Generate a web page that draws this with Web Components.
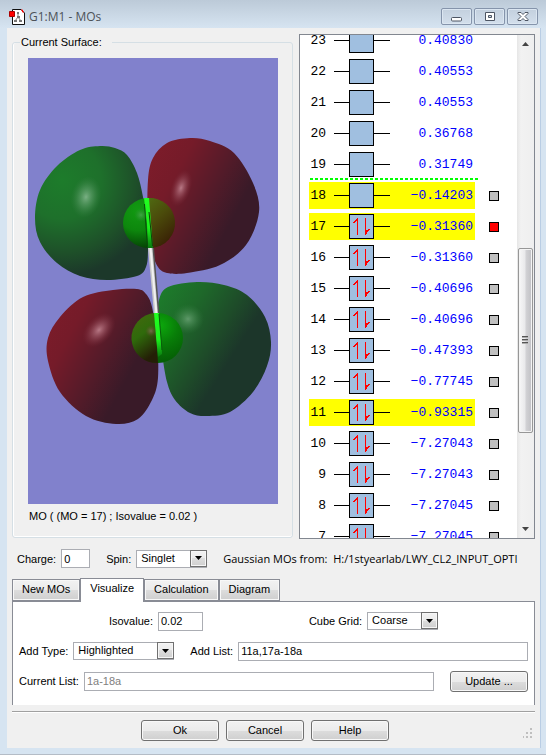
<!DOCTYPE html>
<html lang="en">
<head>
<meta charset="utf-8">
<meta name="viewport" content="width=device-width, initial-scale=1">
<title>G1:M1 - MOs</title>
<style>
  body {
    margin: 0;
    font: 11px/14px "Liberation Sans", Arial, sans-serif;
    color: #000;
  }

  .top {
    display: flex;
    gap: 6px;
    flex: 1 1 0;
    min-height: 0;
  }
  group-box { flex: 281 1 0; min-width: 0; }
  mo-list { flex: 234 1 0; min-width: 0; }

  .settings {
    display: flex;
    align-items: center;
    gap: 16px;
    height: 19px;
    margin: 10px 5px;
  }
  .source {
    flex: 1;
    min-width: 0;
    overflow: hidden;
    white-space: pre;
    font: 11px/18px "Open Sans", "Noto Sans", sans-serif;
  }

  .row {
    display: flex;
    align-items: center;
    gap: 16px;
    height: 20px;
  }
  .row.spread { justify-content: space-evenly; }
  .grow { flex: 1; }
</style>
</head>
<body>

<mo-window heading="G1:M1 - MOs">
  <div class="top">
    <group-box legend="Current Surface:" caption="MO ( (MO = 17) ; Isovalue = 0.02 )">
      <surface-view></surface-view>
    </group-box>
    <mo-list></mo-list>
  </div>

  <div class="settings">
    <text-field label="Charge:" value="0" size="29"></text-field>
    <select-field label="Spin:" value="Singlet" size="71"></select-field>
    <div class="source">Gaussian MOs from:  H:/1styearlab/LWY_CL2_INPUT_OPTI</div>
  </div>

  <tab-panel tabs="New MOs,Visualize,Calculation,Diagram" selected="1">
    <div class="row spread">
      <text-field label="Isovalue:" value="0.02" size="45"></text-field>
      <select-field label="Cube Grid:" value="Coarse" size="71"></select-field>
    </div>
    <div class="row">
      <select-field label="Add Type:" value="Highlighted" size="101"></select-field>
      <text-field class="grow" label="Add List:" value="11a,17a-18a"></text-field>
    </div>
    <div class="row">
      <text-field class="grow" label="Current List:" value="1a-18a" readonly></text-field>
      <push-button>Update ...</push-button>
    </div>
  </tab-panel>

  <push-button slot="actions">Ok</push-button>
  <push-button slot="actions">Cancel</push-button>
  <push-button slot="actions">Help</push-button>
</mo-window>

<script>
const baseCss = /*css*/`
  *, ::before, ::after { box-sizing: border-box; }
  button, input, select { font: inherit; color: inherit; margin: 0; padding: 0; border-radius: 0; }
`;

function attach(elt, html) {
  let shadow = elt.attachShadow({mode: 'open'});
  let templateElt = document.createElement('template');
  templateElt.innerHTML = `<style>${baseCss}</style>` + html;
  shadow.appendChild(templateElt.content.cloneNode(true));
  return shadow;
}

class MoWindow extends HTMLElement {
  constructor() {
    super();
    this.shadow = attach(this, /*html*/`
      <style>
        :host {
          display: flex;
          flex-direction: column;
          box-sizing: border-box;
          height: 100vh;
          padding: 0 6px 6px 7px;
          background: linear-gradient(#bccad8, #d6e4f1 28px);
          border-bottom: 1px solid #b4bcc6;
        }
        header {
          display: flex;
          align-items: center;
          height: 28px;
          padding: 5px 2px 0;
          gap: 4px;
        }
        h1 {
          flex: 1;
          margin: 0;
          font: 12px/18px "Open Sans", "Noto Sans", sans-serif;
          color: #4c5258;
        }
        .controls { display: flex; gap: 2px; }
        .controls button {
          width: 31px;
          height: 17px;
          border: 1px solid #8594ab;
          border-radius: 2px;
          background: linear-gradient(#c3d0de, #d3dfec);
          box-shadow: inset 0 0 0 1px #dbe6f1;
        }
        .controls svg { display: block; margin: auto; }
        main {
          flex: 1;
          min-height: 0;
          display: flex;
          flex-direction: column;
          padding: 6px 5px 0;
          background: #f0f0f0;
          box-shadow: 1px 0 #b9cde4;
        }
        footer {
          display: flex;
          align-items: flex-end;
          height: 37px;
          margin-top: 6px;
          padding-bottom: 7px;
          border-top: 1px solid #a0a0a0;
          box-shadow: inset 0 1px #fff;
        }
        .actions { flex: 1; display: flex; justify-content: center; gap: 7px; }
        .grip { width: 17px; text-align: right; }
      </style>
      <header>
        <svg width="16" height="16" viewBox="0 0 16 16" aria-hidden="true">
          <path d="M3.500.5H12l3.500 3.500V15.500H3.500z" fill="#fff" stroke="#111"/>
          <path d="M12 1h1.500v2H15" fill="none" stroke="#f00"/>
          <path d="M9 4v4M9 8l-3 4M9 8l3 4" stroke="#777" stroke-width="1"/>
          <path d="M8 3h2v2H8zM8 7h3v2H8zM5 11h3v2H5zM10 11h3v2h-3z" fill="#777"/>
          <path d="M.5 2.500h5v5h-5z" fill="#f00" stroke="#a00"/>
        </svg>
        <h1></h1>
        <div class="controls">
          <button aria-label="Minimize"><svg width="12" height="11" viewBox="0 0 12 11"><rect x=".5" y="6.500" width="10" height="3.500" rx="1" fill="#fff" stroke="#4d5563"/></svg></button>
          <button aria-label="Maximize"><svg width="12" height="11" viewBox="0 0 12 11"><path d="M1.500 1.500h9v8h-9zM4.500 4.500h3v2h-3z" fill="#fff" fill-rule="evenodd" stroke="#4d5563"/></svg></button>
          <button aria-label="Close"><svg width="12" height="11" viewBox="0 0 12 11"><path d="M1 1.500h3l2 2 2-2h3v1L8 5.500l3 3v1H8l-2-2-2 2H1v-1l3-3-3-3z" fill="#fff" stroke="#4d5563"/></svg></button>
        </div>
      </header>
      <main>
        <slot></slot>
        <footer>
          <div class="actions"><slot name="actions"></slot></div>
          <div class="grip">
            <svg width="12" height="11" viewBox="0 0 12 11" fill="#bfbfbf" aria-hidden="true"><path d="M7 1h2v2H7zM7 5h2v2H7zM7 9h2v2H7zM3 5h2v2H3zM3 9h2v2H3zM-1 9h2v2h-2z"/></svg>
          </div>
        </footer>
      </main>
    `);
  }

  connectedCallback() {
    this.shadow.querySelector('h1').textContent = this.getAttribute('heading');
  }
}

class GroupBox extends HTMLElement {
  constructor() {
    super();
    this.shadow = attach(this, /*html*/`
      <style>
        :host { display: flex; }
        fieldset {
          flex: 1;
          min-width: 0;
          display: flex;
          flex-direction: column;
          margin: 1px 0;
          padding: 9px 14px 14px 15px;
          border: 1px solid #d5dfe5;
          border-radius: 3px;
          box-shadow: inset 1px 0 #fff, inset 0 -1px #fff;
        }
        legend { margin-left: -8px; padding: 0 10px 0 1px; }
        .content { flex: 1; min-height: 0; display: flex; }
        .caption { margin: 5px 1px 0; white-space: nowrap; }
      </style>
      <fieldset>
        <legend></legend>
        <div class="content"><slot></slot></div>
        <div class="caption"></div>
      </fieldset>
    `);
  }

  connectedCallback() {
    this.shadow.querySelector('legend').textContent = this.getAttribute('legend');
    this.shadow.querySelector('.caption').textContent = this.getAttribute('caption');
  }
}

// outlines of the four lobes, as points along the edge
const lobes = [
  { fill: 'green', points: [[100,146],[115,148],[127,155],[137,173],[143,197],[147,225],[148,250],[146,267],[137,276],[107,280],[80,276],[57,263],[40,242],[35,218],[40,190],[57,166],[80,150]] },
  { fill: 'red', points: [[190,138],[167,143],[153,158],[148,180],[148,220],[153,253],[158,267],[167,273],[187,273],[220,265],[246,245],[259,212],[253,183],[234,153],[210,141]] },
  { fill: 'red', points: [[137,289],[113,290],[83,297],[60,317],[48,338],[48,361],[60,392],[86,416],[116,424],[138,419],[152,400],[158,378],[157,340],[152,307],[146,294]] },
  { fill: 'green2', points: [[197,282],[168,287],[159,300],[158,320],[162,353],[167,382],[175,400],[190,413],[207,416],[230,412],[253,392],[267,366],[271,342],[265,317],[247,295],[224,285]] },
];

// closed Catmull-Rom curve through the points
function smoothPath(points) {
  let n = points.length;
  let d = `M${points[0]}`;
  for (let i = 0; i < n; i++) {
    let [a, b, c, e] = [points[(i + n - 1) % n], points[i], points[(i + 1) % n], points[(i + 2) % n]];
    let c1 = [0, 1].map(k => b[k] + (c[k] - a[k]) / 6);
    let c2 = [0, 1].map(k => c[k] - (e[k] - b[k]) / 6);
    d += `C${c1} ${c2} ${c}`;
  }
  return d + 'Z';
}

class SurfaceView extends HTMLElement {
  constructor() {
    super();
    attach(this, /*html*/`
      <style>
        :host { display: block; flex: 1; min-width: 0; background: #8181cc; }
        svg { display: block; width: 100%; height: 100%; }
      </style>
      <svg viewBox="28 58 250 446" role="img" aria-label="Molecular orbital surface">
        <defs>
          <radialGradient id="green" gradientUnits="userSpaceOnUse" cx="62" cy="180" r="112">
            <stop offset="0" stop-color="#1d7c2b"/><stop offset=".35" stop-color="#1e702b"/><stop offset=".65" stop-color="#1e5029"/><stop offset=".85" stop-color="#1c382a"/>
          </radialGradient>
          <linearGradient id="red" x1="0" y1=".1" x2=".85" y2=".65">
            <stop offset="0" stop-color="#7e1c2a"/><stop offset=".3" stop-color="#751b29"/><stop offset=".65" stop-color="#521b29"/><stop offset=".9" stop-color="#391a28"/>
          </linearGradient>
          <linearGradient id="green2" x1="0" y1=".1" x2=".8" y2=".7">
            <stop offset="0" stop-color="#1d7c2b"/><stop offset=".3" stop-color="#1e682a"/><stop offset=".6" stop-color="#1e4b29"/><stop offset=".8" stop-color="#1c362a"/>
          </linearGradient>
          <radialGradient id="ball" cx=".3" cy=".25" r=".8">
            <stop offset="0" stop-color="#129a12"/><stop offset=".5" stop-color="#0d870d"/><stop offset="1" stop-color="#043c04"/>
          </radialGradient>
          <radialGradient id="ballRight" cx=".55" cy=".25" r=".7">
            <stop offset="0" stop-color="#0ca80c"/><stop offset=".5" stop-color="#087d08"/><stop offset="1" stop-color="#056005"/>
          </radialGradient>
          <linearGradient id="olive" x1="0" y1="0" x2=".5" y2="1">
            <stop offset="0" stop-color="#4f6b12"/><stop offset=".45" stop-color="#4b4c0b"/><stop offset="1" stop-color="#3a2205"/>
          </linearGradient>
          <linearGradient id="olive2" x1="0" y1="0" x2=".4" y2="1">
            <stop offset="0" stop-color="#47680f"/><stop offset=".5" stop-color="#2f6a0b"/><stop offset="1" stop-color="#241f06"/>
          </linearGradient>
          <linearGradient id="stripe" x1="0" y1="0" x2="0" y2="1">
            <stop offset="0" stop-color="#21ff21"/><stop offset=".6" stop-color="#1cf01c"/><stop offset="1" stop-color="#0a770f"/>
          </linearGradient>
          <radialGradient id="shineGreen"><stop offset="0" stop-color="#84b78e" stop-opacity=".9"/><stop offset=".5" stop-color="#5d9c69" stop-opacity=".5"/><stop offset="1" stop-color="#3c8048" stop-opacity="0"/></radialGradient>
          <radialGradient id="shineRed"><stop offset="0" stop-color="#b87986"/><stop offset=".5" stop-color="#9d5563" stop-opacity=".5"/><stop offset="1" stop-color="#7e2b3a" stop-opacity="0"/></radialGradient>
        </defs>
        <g>${lobes.map(lobe => `<path d="${smoothPath(lobe.points)}" fill="url(#${lobe.fill})"/>`).join('')}</g>
        <ellipse cx="86" cy="197" rx="15" ry="21" fill="url(#shineGreen)" transform="rotate(12 86 197)"/>
        <ellipse cx="181" cy="188" rx="10" ry="19" fill="url(#shineRed)" transform="rotate(18 181 188)"/>
        <ellipse cx="99" cy="330" rx="13" ry="20" fill="url(#shineRed)" transform="rotate(42 99 330)"/>
        <ellipse cx="188" cy="319" rx="16" ry="15" fill="url(#shineGreen)" opacity=".7"/>

        <path d="M148 248h5l6 66h-5z" fill="#c9c9c9"/>
        <path d="M149.500 248h2l6 66h-2z" fill="#f1f1f1"/>
        <path d="M152.500 248h1.500l5.500 66h-1.500z" fill="#555"/>

        <circle cx="148" cy="223" r="25" fill="url(#ball)"/>
        <path d="M148 198a25 25 0 0 1 4 50z" fill="url(#olive)"/>
        <path d="M144 198h5l4 50h-5l-1-24z" fill="url(#stripe)"/>
        <path d="M144.500 204l3 44" stroke="#0a4a0a" fill="none"/>
        <path d="M149 212l3.500 34" stroke="#12400a" fill="none"/>
        <circle cx="141" cy="215" r="7" fill="url(#shineGreen)" opacity=".45"/>

        <circle cx="158" cy="338" r="25" fill="url(#ballRight)"/>
        <path d="M155 313a25 25 0 0 0 3 50z" fill="url(#olive2)"/>
        <path d="M154 313h5l3 41-4 3-2-20z" fill="url(#stripe)"/>
        <path d="M159 314l3 36" stroke="#0a5c0a" fill="none"/>
        <circle cx="151" cy="331" r="6" fill="url(#shineRed)" opacity=".5"/>
      </svg>
    `);
  }
}

class MoRow extends HTMLElement {
  constructor() {
    super();
    this.shadow = attach(this, /*html*/`
      <style>
        :host {
          position: relative;
          display: flex;
          align-items: center;
          gap: 14px;
          height: 31px;
          padding-left: 9px;
          font: 13px/27px "Liberation Mono", "Courier New", monospace;
        }
        :host([homo-gap])::before {
          content: "";
          position: absolute;
          left: 10px;
          top: -2px;
          width: 169px;
          height: 2px;
          background: repeating-linear-gradient(90deg, #0f0 0 3px, #fff 3px 5px);
        }
        .level {
          display: flex;
          align-items: center;
          width: 166px;
          height: 27px;
        }
        :host([highlighted]) .level { background: #ff0; }
        .number { width: 17px; text-align: right; }
        .line { width: 16px; height: 1px; background: #000; }
        .number + .line { width: 15px; margin-left: 8px; }
        .box {
          width: 25px;
          height: 25px;
          border: 1px solid #000;
          background: #a0bfe0;
        }
        .box svg { display: block; }
        :host(:not([occupied])) .box svg { display: none; }
        .energy { flex: 1; text-align: right; padding-right: 2px; color: #00f; }
        input {
          appearance: none;
          width: 10px;
          height: 10px;
          border: 1px solid #000;
          background: #c0c0c0;
        }
        input:checked { background: #f00; }
        :host(:not([surface])) input { display: none; }
      </style>
      <div class="level">
        <span class="number"></span>
        <span class="line"></span>
        <span class="box">
          <svg width="23" height="23" viewBox="0 0 23 23" fill="#f00" shape-rendering="crispEdges" aria-hidden="true">
            <path d="M7 3h1v17H7zM15 3h1v17h-1z"/>
            <path d="M8 3v3H6v1H5v1H3V7h1V6h1V5h1V4h1V3zM15 20v-6h1v1h2v-1h2v1h-1v1h-1v1h-1v2h-1v1z"/>
          </svg>
        </span>
        <span class="line"></span>
        <span class="energy"></span>
      </div>
      <input type="checkbox">
    `);
  }

  connectedCallback() {
    let number = this.getAttribute('number');
    this.shadow.querySelector('.number').textContent = number;
    this.shadow.querySelector('.energy').textContent = this.getAttribute('energy');
    let inputElt = this.shadow.querySelector('input');
    inputElt.setAttribute('aria-label', `Show surface ${number}`);
    inputElt.checked = this.hasAttribute('current');
  }
}

const orbitals = [
  [23, '0.40830'], [22, '0.40553'], [21, '0.40553'], [20, '0.36768'], [19, '0.31749'],
  [18, '−0.14203'], [17, '−0.31360'], [16, '−0.31360'], [15, '−0.40696'],
  [14, '−0.40696'], [13, '−0.47393'], [12, '−0.77745'], [11, '−0.93315'],
  [10, '−7.27043'], [9, '−7.27043'], [8, '−7.27045'], [7, '−7.27045'],
];

class MoList extends HTMLElement {
  constructor() {
    super();
    this.shadow = attach(this, /*html*/`
      <style>
        :host {
          display: flex;
          box-sizing: border-box;
          border: 1px solid #828790;
          background: #fff;
        }
        .rows {
          flex: 1;
          min-width: 0;
          overflow: auto;
          scrollbar-width: none;
        }
        .scrollbar {
          display: flex;
          flex-direction: column;
          align-items: center;
          width: 17px;
          background: linear-gradient(90deg, #e6e6e6, #f2f2f2 4px, #efefef);
        }
        .arrow { display: block; flex: none; }
        .before { flex: 196; }
        .after { flex: 88; }
        .thumb {
          flex: 184;
          display: flex;
          align-items: center;
          justify-content: center;
          width: 15px;
          border: 1px solid #979797;
          border-radius: 2px;
          background: linear-gradient(90deg, #f8f8f8, #e9e9eb 6px, #d2d2d5 7px, #c0c0c4);
          box-shadow: inset 0 0 0 1px #f4f4f4;
        }
      </style>
      <div class="rows"></div>
      <div class="scrollbar" aria-hidden="true">
        <svg class="arrow" width="17" height="17" viewBox="0 0 17 17"><path d="M5 11l3.500-4 3.500 4z" fill="#444"/></svg>
        <div class="before"></div>
        <div class="thumb">
          <svg width="7" height="9" viewBox="0 0 7 9" stroke="#555"><path d="M0 .5h6M0 3.500h6M0 6.500h6"/><path d="M0 1.500h6M0 4.500h6M0 7.500h6" stroke="#aaa"/></svg>
        </div>
        <div class="after"></div>
        <svg class="arrow" width="17" height="17" viewBox="0 0 17 17"><path d="M5 6l3.500 4L12 6z" fill="#444"/></svg>
      </div>
    `);
  }

  connectedCallback() {
    let rowsElt = this.shadow.querySelector('.rows');
    orbitals.forEach(([number, energy]) => {
      let rowElt = document.createElement('mo-row');
      rowElt.setAttribute('number', number);
      rowElt.setAttribute('energy', energy);
      rowElt.toggleAttribute('occupied', number <= 17);
      rowElt.toggleAttribute('surface', number <= 18);
      rowElt.toggleAttribute('homo-gap', number === 18);
      rowElt.toggleAttribute('highlighted', [11, 17, 18].includes(number));
      rowElt.toggleAttribute('current', number === 17);
      rowsElt.appendChild(rowElt);
    });
    rowsElt.scrollTop = 10;
  }
}

class TextField extends HTMLElement {
  constructor() {
    super();
    this.shadow = attach(this, /*html*/`
      <style>
        :host { display: flex; align-items: center; gap: 5px; }
        label { white-space: nowrap; }
        input {
          flex: 1;
          min-width: 0;
          height: 19px;
          padding: 0 2px;
          border: 1px solid #abadb3;
          background: #fff;
        }
        :host([size]) input { flex: none; }
        input:read-only { color: #808080; }
      </style>
      <label for="field"></label>
      <input id="field" type="text">
    `);
  }

  connectedCallback() {
    this.shadow.querySelector('label').textContent = this.getAttribute('label');
    let inputElt = this.shadow.querySelector('input');
    inputElt.value = this.getAttribute('value');
    inputElt.readOnly = this.hasAttribute('readonly');
    if (this.hasAttribute('size')) {
      inputElt.style.width = this.getAttribute('size') + 'px';
    }
  }
}

class SelectField extends HTMLElement {
  constructor() {
    super();
    this.shadow = attach(this, /*html*/`
      <style>
        :host { display: flex; align-items: center; gap: 5px; }
        label { white-space: nowrap; }
        .control { display: grid; height: 18px; }
        select, .arrow { grid-area: 1 / 1; }
        select {
          appearance: none;
          width: 100%;
          height: 18px;
          padding: 0 18px 2px 4px;
          border: 1px solid #abadb3;
          background: #fff;
        }
        .arrow {
          justify-self: end;
          display: flex;
          align-items: center;
          justify-content: center;
          width: 17px;
          height: 17px;
          border: 1px solid #707070;
          background: linear-gradient(#f2f2f2, #ebebeb 50%, #dddddd 50%, #cfcfcf);
          box-shadow: inset 0 0 0 1px #f6f6f6;
          pointer-events: none;
        }
      </style>
      <label for="field"></label>
      <div class="control">
        <select id="field"><option></option></select>
        <span class="arrow"><svg width="7" height="4" viewBox="0 0 7 4"><path d="M0 0h7L3.500 4z"/></svg></span>
      </div>
    `);
  }

  connectedCallback() {
    this.shadow.querySelector('label').textContent = this.getAttribute('label');
    this.shadow.querySelector('option').textContent = this.getAttribute('value');
    this.shadow.querySelector('.control').style.width = this.getAttribute('size') + 'px';
  }
}

class PushButton extends HTMLElement {
  constructor() {
    super();
    attach(this, /*html*/`
      <style>
        :host { display: block; }
        button {
          display: block;
          min-width: 78px;
          height: 21px;
          padding: 0 8px 1px;
          border: 1px solid #707070;
          border-radius: 3px;
          background: linear-gradient(#f2f2f2, #ebebeb 50%, #dddddd 50%, #cfcfcf);
          box-shadow: inset 0 0 0 1px #f8f8f8;
        }
      </style>
      <button type="button"><slot></slot></button>
    `);
  }
}

class TabPanel extends HTMLElement {
  constructor() {
    super();
    this.shadow = attach(this, /*html*/`
      <style>
        :host { display: block; }
        .tabs {
          display: flex;
          align-items: flex-end;
          height: 23px;
        }
        .tabs button {
          height: 22px;
          padding: 0 9px 2px;
          border: 1px solid #898c95;
          background: linear-gradient(#f2f2f2, #ebebeb 50%, #dddddd 50%, #cfcfcf);
          box-shadow: inset 0 0 0 1px #f8f8f8;
        }
        .tabs button[aria-selected="true"] {
          z-index: 1;
          height: 24px;
          margin-bottom: -1px;
          padding-bottom: 5px;
          border-bottom: 0;
          background: #fff;
          box-shadow: none;
        }
        .panel {
          display: grid;
          gap: 10px;
          padding: 9px 6px 14px;
          border: 1px solid #898c95;
          border-bottom: 0;
          background: #fff;
        }
      </style>
      <div class="tabs" role="tablist"></div>
      <div class="panel" role="tabpanel"><slot></slot></div>
    `);
  }

  connectedCallback() {
    let tabsElt = this.shadow.querySelector('.tabs');
    this.getAttribute('tabs').split(',').forEach((name, i) => {
      let tabElt = document.createElement('button');
      tabElt.type = 'button';
      tabElt.setAttribute('role', 'tab');
      tabElt.setAttribute('aria-selected', i === +this.getAttribute('selected'));
      tabElt.textContent = name;
      tabsElt.appendChild(tabElt);
    });
  }
}

customElements.define('mo-window', MoWindow);
customElements.define('group-box', GroupBox);
customElements.define('surface-view', SurfaceView);
customElements.define('text-field', TextField);
customElements.define('select-field', SelectField);
customElements.define('push-button', PushButton);
customElements.define('tab-panel', TabPanel);
customElements.define('mo-row', MoRow);
// last, its scroll position needs the final height
customElements.define('mo-list', MoList);
</script>
</body>
</html>
